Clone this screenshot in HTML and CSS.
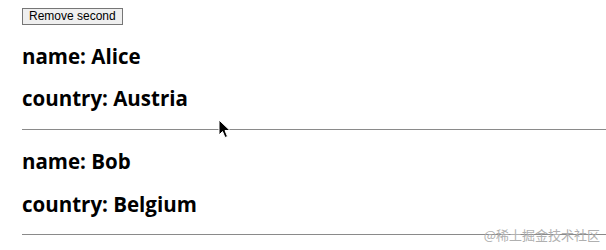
FILE: index.html
```html
<!DOCTYPE html>
<html lang="en">
<head>
  <meta charset="UTF-8" />
  <title>List</title>
  <link rel="stylesheet" href="styles.css">
</head>
<body>
  <button class="remove-btn">Remove second</button>

  <div class="person">
    <h3>name: Alice</h3>
    <h3>country: Austria</h3>
    <hr>
  </div>

  <div class="person">
    <h3>name: Bob</h3>
    <h3>country: Belgium</h3>
    <hr>
  </div>

  <!-- mouse pointer in the capture -->
  <svg class="cursor" width="14" height="20" viewBox="0 0 14 20">
    <path d="M1 1 L1 16 L4.5 12.5 L7 18.5 L9.5 17.5 L7 11.5 L12 11.5 Z" fill="#000" stroke="#fff" stroke-width="1"/>
  </svg>

  <div class="watermark">@稀土掘金技术社区</div>
</body>
</html>
```

FILE: styles.css
```css
body {
  margin: 8px 0 0 22px;
  font-family: "Liberation Sans", Arial, sans-serif;
  background: #fff;
  position: relative;
  overflow: hidden;
  height: 242px;
}

.remove-btn {
  display: block;
  font-family: "Liberation Sans", Arial, sans-serif;
  font-size: 12px;
  padding: 1px 6px;
  height: 17px;
  line-height: 13px;
  background: #efefef;
  border: 1px solid #767676;
  border-radius: 0;
  color: #000;
}

h3 {
  font-family: "Open Sans", sans-serif;
  font-weight: 700;
  font-size: 20.5px;
  line-height: 24px;
  margin: 18.72px 0;
  color: #000;
}

hr {
  margin: 8px 0;
  border: none;
  border-top: 1px solid #8a8a8a;
  height: 0;
}

.cursor {
  position: absolute;
  left: 196px;
  top: 111px;
}

.watermark {
  position: absolute;
  right: 6px;
  top: 217px;
  font-family: "Noto Sans CJK SC", sans-serif;
  font-size: 13px;
  color: #b0b0b0;
}
```
